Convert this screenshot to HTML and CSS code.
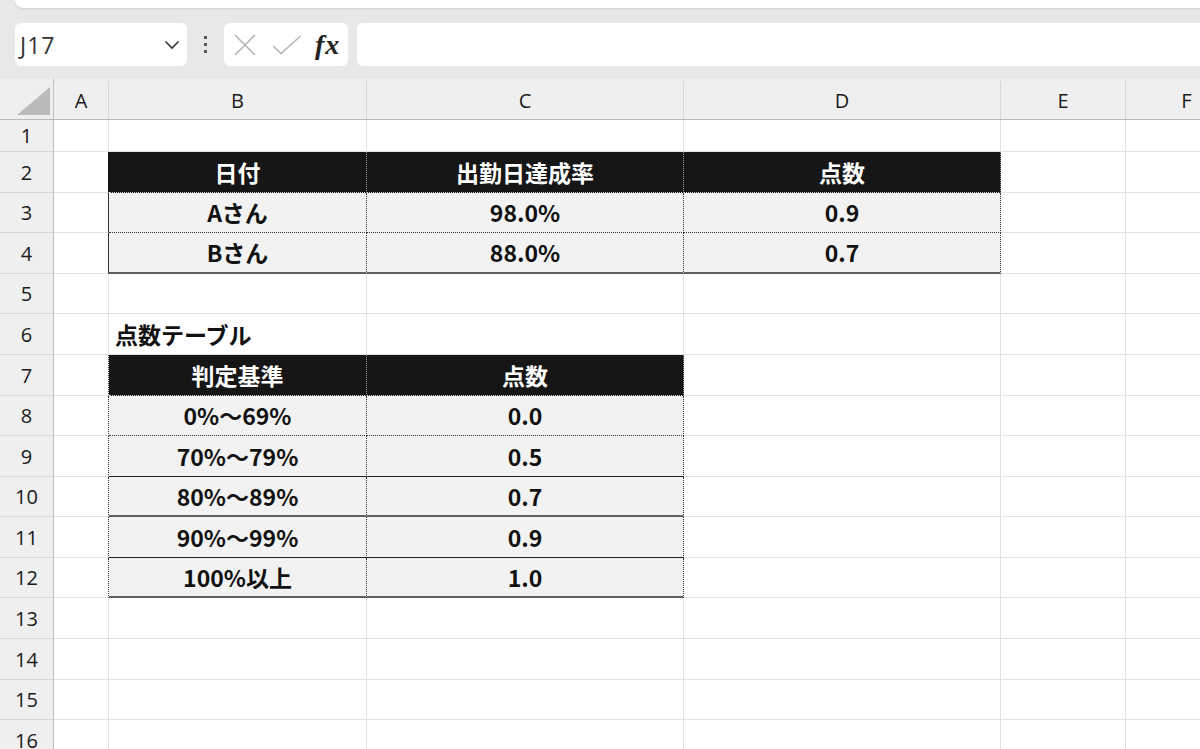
FILE: index.html
```html
<!DOCTYPE html>
<html lang="ja">
<head>
    <meta charset="UTF-8">
    <meta name="viewport" content="width=device-width, initial-scale=1.0">
    <title>点数テーブル</title>
    <link rel="stylesheet" href="styles.css">
</head>
<body>
    <div class="top">
        <div class="ribbon"></div>
        <div class="toolbar">
            <div class="namebox">
                <span>J17</span>
                <svg width="16" height="10" viewBox="0 0 16 10"><path d="M1.5 1.5 L8 8 L14.5 1.5" fill="none" stroke="#333" stroke-width="1.6"/></svg>
            </div>
            <div class="grip"><i></i><i></i><i></i></div>
            <div class="fxbox">
                <svg width="22" height="22" viewBox="0 0 22 22"><path d="M1 1 L21 21 M21 1 L1 21" stroke="#b4b4b4" stroke-width="1.6"/></svg>
                <svg width="30" height="20" viewBox="0 0 30 20"><path d="M1 11 L9 18.5 L28.5 1" fill="none" stroke="#b4b4b4" stroke-width="1.6"/></svg>
                <span class="fx">fx</span>
            </div>
            <div class="formula"></div>
        </div>
    </div>

    <div class="sheet">
        <div class="row head">
            <div class="corner"><svg width="33" height="28" viewBox="0 0 33 28"><path d="M33 0 L33 28 L0 28 Z" fill="#bababa"/></svg></div>
            <div class="ch">A</div><div class="ch">B</div><div class="ch">C</div><div class="ch">D</div><div class="ch">E</div><div class="ch">F</div>
        </div>

        <div class="row r1">
            <div class="rh">1</div><div class="c"></div><div class="c"></div><div class="c"></div><div class="c"></div><div class="c"></div><div class="c"></div>
        </div>
        <div class="row">
            <div class="rh">2</div><div class="c l-dark"></div>
            <div class="c hd">日付</div><div class="c hd">出勤日達成率</div><div class="c hd">点数</div>
            <div class="c"></div><div class="c"></div>
        </div>
        <div class="row h40">
            <div class="rh">3</div><div class="c l-solid"></div>
            <div class="c dt b-dot">Aさん</div><div class="c dt b-dot">98.0%</div><div class="c dt b-dot">0.9</div>
            <div class="c"></div><div class="c"></div>
        </div>
        <div class="row">
            <div class="rh">4</div><div class="c l-solid"></div>
            <div class="c dt b-thick">Bさん</div><div class="c dt b-thick">88.0%</div><div class="c dt b-thick">0.7</div>
            <div class="c"></div><div class="c"></div>
        </div>
        <div class="row h40">
            <div class="rh">5</div><div class="c"></div><div class="c"></div><div class="c"></div><div class="c"></div><div class="c"></div><div class="c"></div>
        </div>
        <div class="row">
            <div class="rh">6</div><div class="c"></div>
            <div class="c title">点数テーブル</div>
            <div class="c"></div><div class="c"></div><div class="c"></div><div class="c"></div>
        </div>
        <div class="row">
            <div class="rh">7</div><div class="c l-dot"></div>
            <div class="c hd">判定基準</div><div class="c hd">点数</div>
            <div class="c"></div><div class="c"></div><div class="c"></div>
        </div>
        <div class="row h40">
            <div class="rh">8</div><div class="c l-dot"></div>
            <div class="c dt b-dot">0%～69%</div><div class="c dt b-dot">0.0</div>
            <div class="c"></div><div class="c"></div><div class="c"></div>
        </div>
        <div class="row">
            <div class="rh">9</div><div class="c l-dot"></div>
            <div class="c dt b-thin">70%～79%</div><div class="c dt b-thin">0.5</div>
            <div class="c"></div><div class="c"></div><div class="c"></div>
        </div>
        <div class="row h40">
            <div class="rh">10</div><div class="c l-dot"></div>
            <div class="c dt b-thick">80%～89%</div><div class="c dt b-thick">0.7</div>
            <div class="c"></div><div class="c"></div><div class="c"></div>
        </div>
        <div class="row">
            <div class="rh">11</div><div class="c l-dot"></div>
            <div class="c dt b-thin">90%～99%</div><div class="c dt b-thin">0.9</div>
            <div class="c"></div><div class="c"></div><div class="c"></div>
        </div>
        <div class="row h40">
            <div class="rh">12</div><div class="c l-dot"></div>
            <div class="c dt b-thick">100%以上</div><div class="c dt b-thick">1.0</div>
            <div class="c"></div><div class="c"></div><div class="c"></div>
        </div>
        <div class="row">
            <div class="rh">13</div><div class="c"></div><div class="c"></div><div class="c"></div><div class="c"></div><div class="c"></div><div class="c"></div>
        </div>
        <div class="row">
            <div class="rh">14</div><div class="c"></div><div class="c"></div><div class="c"></div><div class="c"></div><div class="c"></div><div class="c"></div>
        </div>
        <div class="row h40">
            <div class="rh">15</div><div class="c"></div><div class="c"></div><div class="c"></div><div class="c"></div><div class="c"></div><div class="c"></div>
        </div>
        <div class="row">
            <div class="rh">16</div><div class="c"></div><div class="c"></div><div class="c"></div><div class="c"></div><div class="c"></div><div class="c"></div>
        </div>
    </div>
</body>
</html>
```

FILE: styles.css
```css
body {
    margin: 0;
    padding: 0;
    width: 1200px;
    height: 749px;
    overflow: hidden;
    background-color: #ffffff;
    font-family: "Open Sans", "Noto Sans", sans-serif;
}

/* top bar */
.top {
    background-color: #e8e8e8;
    height: 79px;
    box-sizing: border-box;
}

.ribbon {
    height: 8px;
    margin-left: 15px;
    background-color: #ffffff;
    border-radius: 0 0 0 10px;
    box-shadow: 0 1px 2px rgba(0, 0, 0, 0.12);
}

.toolbar {
    display: flex;
    align-items: center;
    padding: 15px 0 0 15px;
}

.namebox {
    width: 172px;
    height: 43px;
    box-sizing: border-box;
    background-color: #ffffff;
    border-radius: 6px;
    display: flex;
    align-items: center;
    justify-content: space-between;
    padding: 0 7px 0 5px;
    font-size: 23px;
    color: #333333;
}

.namebox span {
    letter-spacing: 1px;
}

.grip {
    width: 37px;
    display: flex;
    flex-direction: column;
    align-items: center;
    gap: 4px;
}

.grip i {
    display: block;
    width: 3px;
    height: 3px;
    background-color: #555555;
}

.fxbox {
    width: 124px;
    height: 43px;
    box-sizing: border-box;
    background-color: #ffffff;
    border-radius: 6px;
    display: flex;
    align-items: center;
    gap: 13px;
    padding-left: 10px;
}

.fxbox svg + svg {
    margin-left: 3px;
}

.fx {
    font-family: "Liberation Serif", "DejaVu Serif", serif;
    font-style: italic;
    font-weight: bold;
    font-size: 28px;
    color: #222222;
    margin-left: 0;
    letter-spacing: 1px;
}

.formula {
    flex: 1;
    height: 43px;
    margin-left: 9px;
    margin-right: -10px;
    background-color: #ffffff;
    border-radius: 6px;
}

/* sheet grid */
.row {
    display: grid;
    grid-template-columns: 54px 55px 258px 317px 317px 125px 122px;
    height: 41px;
    box-sizing: border-box;
}

.row.h40 {
    height: 40px;
}

.row.r1 {
    height: 32px;
}

.row > div {
    box-sizing: border-box;
    overflow: hidden;
}

.head {
    background-color: #efefef;
    border-bottom: 1px solid #b8b8b8;
}

.corner {
    display: flex;
    align-items: flex-end;
    justify-content: flex-end;
    padding: 0 3px 4px 0;
    border-right: 1px solid #bdbdbd;
}

.ch {
    display: flex;
    align-items: center;
    justify-content: center;
    border-right: 1px solid #d6d6d6;
    margin-top: 2px;
    font-size: 20px;
    color: #1a1a1a;
}

.rh {
    background-color: #efefef;
    border-right: 1px solid #bdbdbd;
    border-bottom: 1px solid #d9d9d9;
    display: flex;
    align-items: center;
    justify-content: center;
    font-size: 20px;
    color: #1a1a1a;
}

.c {
    border-right: 1px solid #e1e1e1;
    border-bottom: 1px solid #e1e1e1;
    display: flex;
    align-items: center;
    justify-content: center;
    font-family: "Noto Sans CJK JP", "Noto Sans", sans-serif;
    font-weight: bold;
    font-size: 23px;
    line-height: 1;
    color: #111111;
}

.title {
    justify-content: flex-start;
    padding-left: 6px;
}

/* table cells */
.hd {
    background-color: #161616;
    color: #ffffff;
    border-right: 1px dotted #9a9a9a;
    border-bottom: 1px dotted #cfcfcf;
}

.dt {
    background-color: #f2f2f2;
    border-right: 1px dotted #333333;
}

.b-dot {
    border-bottom: 1px dotted #333333;
}

.b-thin {
    border-bottom: 1px solid #222222;
}

.b-thick {
    border-bottom: 2px solid #5e5e5e;
}

.l-solid {
    border-right: 1px solid #333333;
}

.l-dark {
    border-right: 1px solid #161616;
}

.l-dot {
    border-right: 1px dotted #333333;
}
```
